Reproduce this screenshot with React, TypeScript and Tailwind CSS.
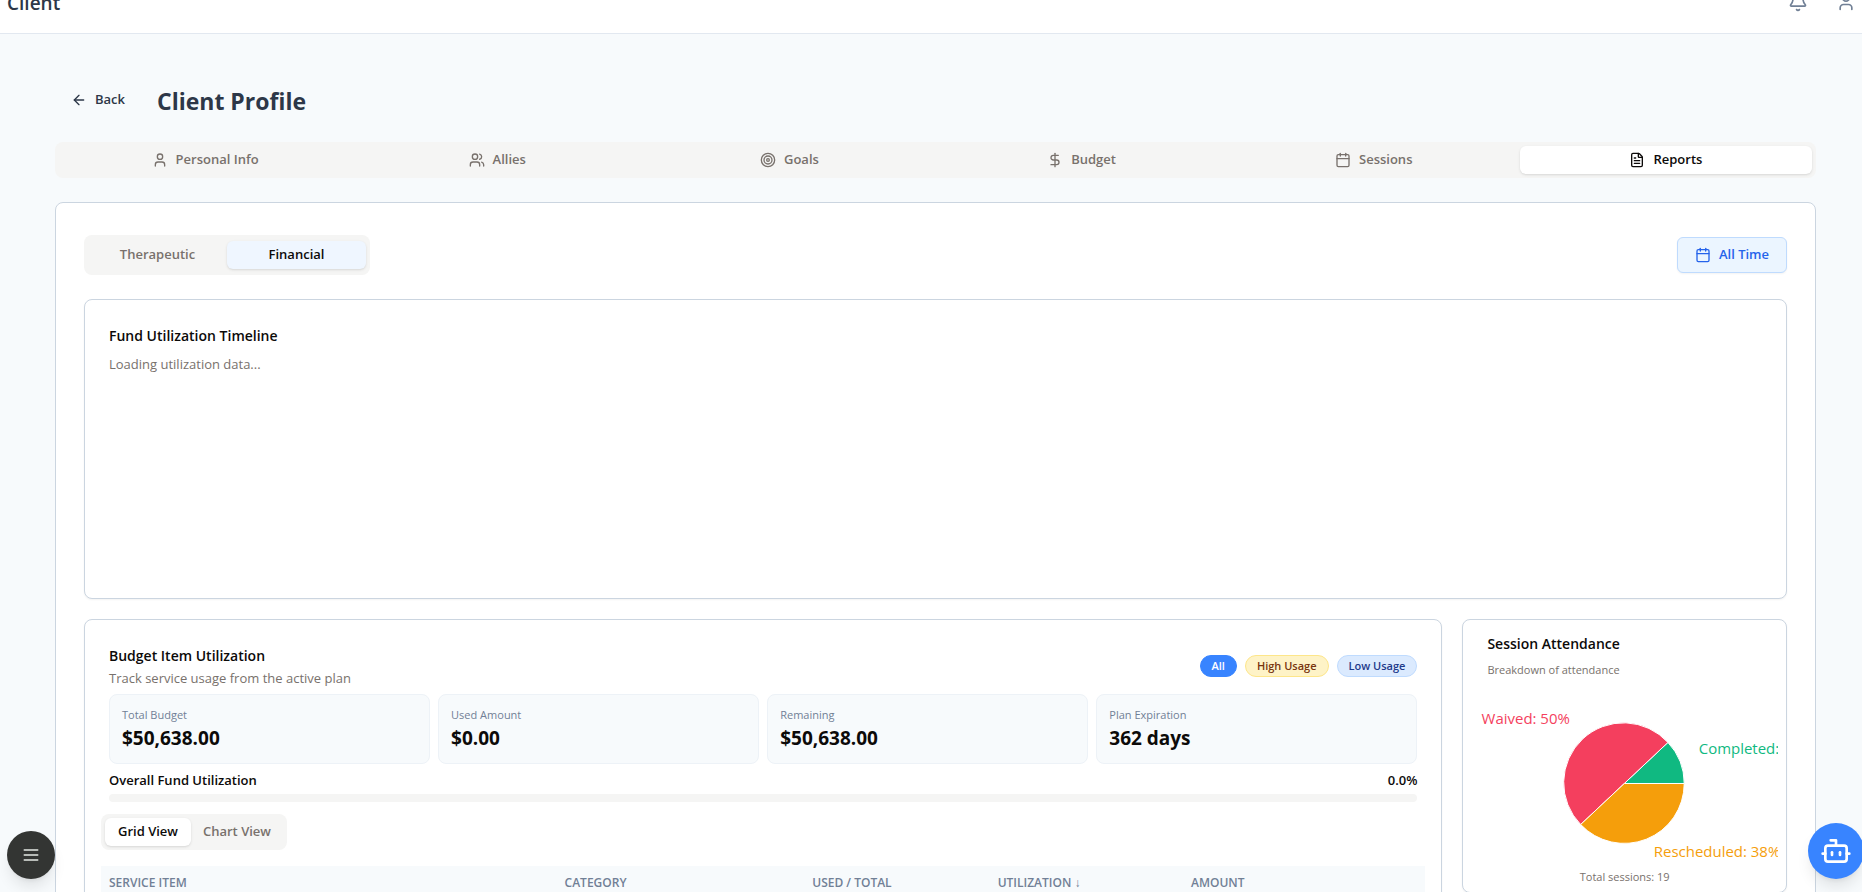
import React from "react";
import {
  ArrowLeft,
  Bell,
  Bot,
  Calendar,
  DollarSign,
  FileText,
  Target,
  User,
  Users,
  type LucideIcon,
} from "lucide-react";

const tabs: { label: string; icon: LucideIcon }[] = [
  { label: "Personal Info", icon: User },
  { label: "Allies", icon: Users },
  { label: "Goals", icon: Target },
  { label: "Budget", icon: DollarSign },
  { label: "Sessions", icon: Calendar },
  { label: "Reports", icon: FileText },
];

const stats = [
  { label: "Total Budget", value: "$50,638.00" },
  { label: "Used Amount", value: "$0.00" },
  { label: "Remaining", value: "$50,638.00" },
  { label: "Plan Expiration", value: "362 days" },
];

const columns = [
  { label: "SERVICE ITEM", width: "w-[34.4%]" },
  { label: "CATEGORY", width: "w-[18.7%]" },
  { label: "USED / TOTAL", width: "w-[14%]" },
  { label: "UTILIZATION ↓", width: "w-[14.6%]" },
  { label: "AMOUNT", width: "w-[18.3%]" },
];

function TopBar() {
  return (
    <header className="-mt-[30px] flex h-16 shrink-0 items-center justify-between border-b border-[#e2e8f0] bg-white pr-1.5 pl-[7px]">
      <span className="pt-1 text-[19px] font-semibold text-[#2d3748]">Client</span>
      <div className="flex items-center gap-7 text-[#718096]">
        <button aria-label="Notifications">
          <Bell size={20} />
        </button>
        <button aria-label="Account">
          <User size={20} />
        </button>
      </div>
    </header>
  );
}

function ProfileTabs() {
  return (
    <div role="tablist" className="grid h-9 grid-cols-6 rounded-lg bg-[#f5f5f4] p-1">
      {tabs.map(({ label, icon: Icon }) => {
        const active = label === "Reports";
        return (
          <button
            key={label}
            role="tab"
            aria-selected={active}
            className={
              active
                ? "flex items-center justify-center gap-2 rounded-md bg-white font-semibold text-[#0c0a09] shadow-sm"
                : "flex items-center justify-center gap-2 rounded-md font-semibold text-[#78716c]"
            }
          >
            <Icon size={16} />
            {label}
          </button>
        );
      })}
    </div>
  );
}

function Timeline() {
  return (
    <section className="mt-6 h-[300px] rounded-lg border border-[#cbd5e0] bg-white p-6 shadow-xs">
      <h2 className="text-sm leading-6 font-semibold text-[#0c0a09]">Fund Utilization Timeline</h2>
      <p className="mt-1.5 leading-5 text-[#78716c]">Loading utilization data...</p>
    </section>
  );
}

function BudgetCard() {
  return (
    <section className="col-span-4 rounded-lg border border-[#cbd5e0] bg-white p-6 shadow-xs">
      <div className="flex items-center justify-between">
        <div>
          <h2 className="text-sm leading-6 font-semibold text-[#0c0a09]">Budget Item Utilization</h2>
          <p className="leading-5 text-[#78716c]">Track service usage from the active plan</p>
        </div>
        <div className="flex gap-2 text-[11px] leading-5 font-semibold">
          <button className="rounded-full border border-[#3884ff] bg-[#3884ff] px-[11px] text-white">All</button>
          <button className="rounded-full border border-[#fde68a] bg-[#fef3c7] px-[11px] text-[#78350f]">High Usage</button>
          <button className="rounded-full border border-[#bfdbfe] bg-[#dbeafe] px-[11px] text-[#1e3a8a]">Low Usage</button>
        </div>
      </div>

      <div className="mt-1.5 grid grid-cols-4 gap-2">
        {stats.map((stat) => (
          <div key={stat.label} className="h-[70px] rounded-lg border border-[#edf2f7] bg-[#f7fafc] px-3 pt-3">
            <p className="text-[11px] leading-4 text-[#718096]">{stat.label}</p>
            <p className="text-[19px] leading-[30px] font-bold text-[#0c0a09]">{stat.value}</p>
          </div>
        ))}
      </div>

      <div className="mt-1.5 flex justify-between leading-5 font-semibold text-[#0c0a09]">
        <span>Overall Fund Utilization</span>
        <span>0.0%</span>
      </div>
      <div className="mt-1 h-2 rounded-full bg-[#f5f5f4]" />

      <div className="-mx-2 mt-3">
        <div role="tablist" className="inline-flex h-9 rounded-lg bg-[#f5f5f4] p-1 align-top">
          <button role="tab" aria-selected="true" className="rounded-md bg-white px-[13px] font-semibold text-[#0c0a09] shadow-sm">
            Grid View
          </button>
          <button role="tab" aria-selected="false" className="rounded-md px-3 font-semibold text-[#78716c]">
            Chart View
          </button>
        </div>
        <table className="mt-4 w-full table-fixed bg-[#f7fafc]">
          <thead>
            <tr>
              {columns.map((column) => (
                <th
                  key={column.label}
                  className={`${column.width} px-2 pt-[9px] pb-2 text-left text-xs leading-4 font-semibold whitespace-nowrap text-[#718096]`}
                >
                  {column.label}
                </th>
              ))}
            </tr>
          </thead>
        </table>
      </div>
    </section>
  );
}

function AttendanceCard() {
  return (
    <section className="h-[274px] self-start rounded-lg border border-[#cbd5e0] bg-white p-2 shadow-xs">
      <div className="px-4 pt-1">
        <h2 className="text-sm leading-6 font-semibold text-[#0c0a09]">Session Attendance</h2>
        <p className="mt-1.5 text-[11px] leading-4 text-[#78716c]">Breakdown of attendance</p>
      </div>
      <svg viewBox="0 0 307 186" className="mt-[7px] block h-[186px] w-full text-[15px]" aria-label="Session attendance">
        <g stroke="#ffffff" strokeWidth="1">
          <path d="M153.5 98.5 H213.5 A60 60 0 0 0 197.2 57.4 Z" fill="#10b981" />
          <path d="M153.5 98.5 L197.2 57.4 A60 60 0 1 0 109.8 139.6 Z" fill="#f43f5e" />
          <path d="M153.5 98.5 L109.8 139.6 A60 60 0 0 0 213.5 98.5 Z" fill="#f59e0b" />
        </g>
        <text x="99" y="39" textAnchor="end" fill="#f43f5e">Waived: 50%</text>
        <text x="228" y="69" fill="#10b981">Completed: 12%</text>
        <text x="183" y="172" fill="#f59e0b">Rescheduled: 38%</text>
      </svg>
      <p className="-mt-0.5 text-center text-[11px] leading-4 text-[#78716c]">Total sessions: 19</p>
    </section>
  );
}

export default function App() {
  return (
    <div className="flex h-screen flex-col overflow-hidden bg-[#f7fafc] font-['Open_Sans','Noto_Sans',sans-serif] text-[13px]">
      <TopBar />
      <main className="shrink-0 pt-[46px] pr-[46px] pl-[55px]">
        <div className="flex h-10 items-center gap-5">
          <button className="flex h-9 items-center gap-2 px-4 py-2 pr-3 font-semibold text-[#2d3748]">
            <ArrowLeft size={16} />
            Back
          </button>
          <h1 className="pt-0.5 text-[23px] font-bold text-[#2d3748]">Client Profile</h1>
        </div>
        <div className="mt-[22px]">
          <ProfileTabs />
        </div>
        <div className="mt-6 rounded-lg border border-[#cbd5e0] bg-white px-7 pt-8 pb-8">
          <div className="flex items-center justify-between">
            <div role="tablist" className="grid h-10 w-[286px] grid-cols-2 items-center rounded-lg bg-[#f5f5f4] p-1 font-semibold">
              <button role="tab" aria-selected="false" className="h-7 rounded-md text-[#78716c]">
                Therapeutic
              </button>
              <button role="tab" aria-selected="true" className="h-7 rounded-md bg-[#eff6ff] text-[#0c0a09] shadow-sm">
                Financial
              </button>
            </div>
            <button className="flex h-9 items-center gap-2 rounded-md border border-[#bfdbfe] bg-[#ebf5ff] px-[17px] font-semibold text-[#2563eb] shadow-xs">
              <Calendar size={16} />
              All Time
            </button>
          </div>
          <Timeline />
          <div className="mt-5 grid grid-cols-5 gap-5">
            <BudgetCard />
            <AttendanceCard />
          </div>
        </div>
      </main>
      <button
        aria-label="Open menu"
        className="fixed bottom-[13px] left-[7px] flex size-12 items-center justify-center rounded-full bg-[#333533] text-[#e5e9e5] shadow-lg"
      >
        <svg viewBox="0 0 24 24" className="size-5" fill="none" stroke="currentColor" strokeWidth="2" strokeLinecap="round">
          <path d="M4 6h16M4 12h16M4 18h16" />
        </svg>
      </button>
      <button
        aria-label="Open assistant"
        className="fixed -right-0.5 bottom-[13px] flex size-14 items-center justify-center rounded-full bg-[#3884ff] text-white shadow-lg"
      >
        <Bot size={32} />
      </button>
    </div>
  );
}
